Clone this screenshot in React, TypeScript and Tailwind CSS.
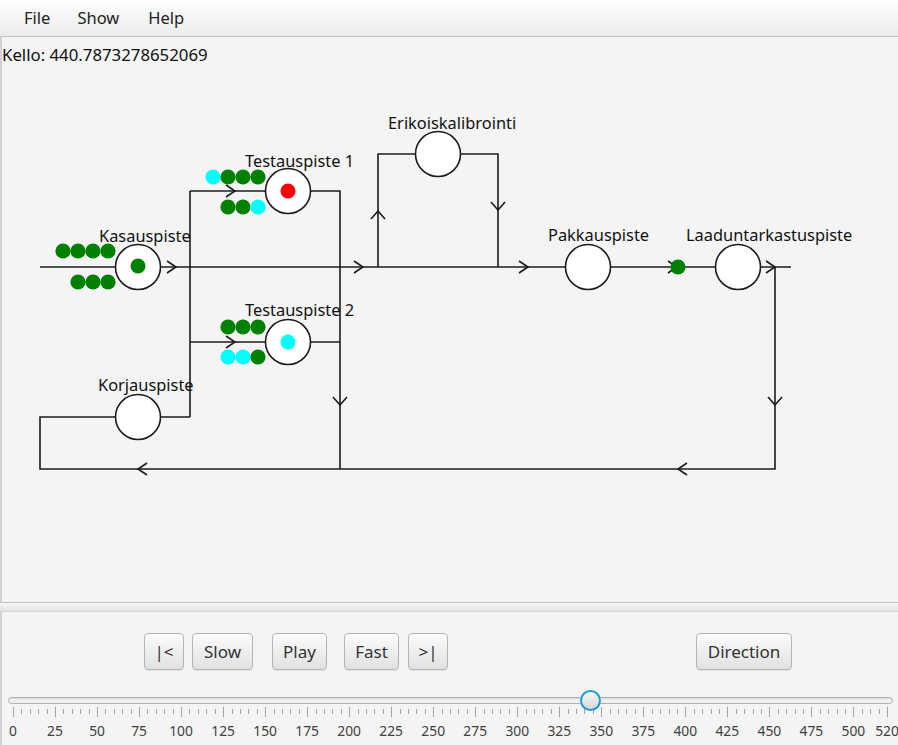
import type { ReactNode } from 'react';

type Pt = { x: number; y: number };
type Dot = Pt & { c: string };

const GREEN = '#008000';
const CYAN = '#00ffff';
const RED = '#ff0000';
const INK = '#1c1c1c';

const stations: { x: number; y: number; label: string; lx: number; ly: number; inner?: string }[] = [
  { x: 138, y: 267, label: 'Kasauspiste', lx: 99, ly: 236, inner: GREEN },
  { x: 288, y: 191, label: 'Testauspiste 1', lx: 245, ly: 161, inner: RED },
  { x: 288, y: 342, label: 'Testauspiste 2', lx: 245, ly: 310, inner: CYAN },
  { x: 438, y: 154, label: 'Erikoiskalibrointi', lx: 388, ly: 123 },
  { x: 588, y: 267, label: 'Pakkauspiste', lx: 548, ly: 235 },
  { x: 738, y: 267, label: 'Laaduntarkastuspiste', lx: 686, ly: 235 },
  { x: 138, y: 417, label: 'Korjauspiste', lx: 98, ly: 385 },
];

const queue: Dot[] = [
  { x: 63, y: 251, c: GREEN },
  { x: 78, y: 251, c: GREEN },
  { x: 93, y: 251, c: GREEN },
  { x: 108, y: 251, c: GREEN },
  { x: 78, y: 282, c: GREEN },
  { x: 93, y: 282, c: GREEN },
  { x: 108, y: 282, c: GREEN },
  { x: 213, y: 177, c: CYAN },
  { x: 228, y: 177, c: GREEN },
  { x: 243, y: 177, c: GREEN },
  { x: 258, y: 177, c: GREEN },
  { x: 228, y: 207, c: GREEN },
  { x: 243, y: 207, c: GREEN },
  { x: 258, y: 207, c: CYAN },
  { x: 228, y: 327, c: GREEN },
  { x: 243, y: 327, c: GREEN },
  { x: 258, y: 327, c: GREEN },
  { x: 228, y: 357, c: CYAN },
  { x: 243, y: 357, c: CYAN },
  { x: 258, y: 357, c: GREEN },
  { x: 678, y: 267, c: GREEN },
];

// tip point + direction of the chevron
const arrows: { x: number; y: number; d: 'r' | 'l' | 'u' | 'd' }[] = [
  { x: 176, y: 267, d: 'r' },
  { x: 235, y: 191, d: 'r' },
  { x: 235, y: 342, d: 'r' },
  { x: 363, y: 267, d: 'r' },
  { x: 378, y: 211, d: 'u' },
  { x: 498, y: 210, d: 'd' },
  { x: 528, y: 267, d: 'r' },
  { x: 677, y: 267, d: 'r' },
  { x: 775, y: 267, d: 'r' },
  { x: 340, y: 405, d: 'd' },
  { x: 775, y: 405, d: 'd' },
  { x: 678, y: 469, d: 'l' },
  { x: 138, y: 469, d: 'l' },
];

const chevron = (a: { x: number; y: number; d: string }) => {
  const { x, y } = a;
  if (a.d === 'r') return `M${x - 9} ${y - 6} L${x} ${y} L${x - 9} ${y + 6}`;
  if (a.d === 'l') return `M${x + 9} ${y - 6} L${x} ${y} L${x + 9} ${y + 6}`;
  if (a.d === 'u') return `M${x - 7} ${y + 8} L${x} ${y} L${x + 7} ${y + 8}`;
  return `M${x - 7} ${y - 8} L${x} ${y} L${x + 7} ${y - 8}`;
};

const Diagram = () => (
  <svg width="896" height="528" viewBox="2 74 896 528" className="block">
    <g stroke={INK} strokeWidth="1.6" fill="none">
      <path d="M40 267 H791" />
      <path d="M190 191 V417" />
      <path d="M190 191 H340 V469" />
      <path d="M190 342 H340" />
      <path d="M378 267 V154 H498 V267" />
      <path d="M775 267 V469 H40 V417 H190" />
      {arrows.map((a, i) => (
        <path key={i} d={chevron(a)} />
      ))}
    </g>
    {stations.map(s => (
      <g key={s.label}>
        <circle cx={s.x} cy={s.y} r="22.5" fill="#fff" stroke={INK} strokeWidth="1.6" />
        {s.inner && <circle cx={s.x} cy={s.y - (s.inner === GREEN ? 1 : 0)} r="7.5" fill={s.inner} />}
        <text x={s.lx} y={s.ly + 6} fontSize="16.4" fill="#111" fontFamily="'Noto Sans', sans-serif">
          {s.label}
        </text>
      </g>
    ))}
    {queue.map((d, i) => (
      <circle key={i} cx={d.x} cy={d.y} r="7.6" fill={d.c} />
    ))}
  </svg>
);

const Btn = ({ children, className }: { children: ReactNode; className: string }) => (
  <button
    type="button"
    className={`h-[37px] rounded-[4px] border border-[#b4b4b4] bg-linear-to-b from-[#fcfcfc] to-[#e1e1e1] text-[17px] text-[#333] shadow-[0_1px_1px_rgba(0,0,0,0.07)] ${className}`}
  >
    {children}
  </button>
);

const sx = (v: number) => 13 + (v * 874) / 520;

const Ticks = () => {
  const minors = Array.from({ length: 105 }, (_, i) => i * 5);
  const labels = Array.from({ length: 21 }, (_, i) => i * 25).concat([520]);
  return (
    <svg width="898" height="41" viewBox="0 704 898 41" className="block">
      <g stroke="#a3a3a3" strokeWidth="1">
        {minors.map(v => {
          const major = v % 25 === 0 || v === 520;
          const x = Math.round(sx(v)) + 0.5;
          return <line key={v} x1={x} x2={x} y1={major ? 707 : 709} y2={major ? 717 : 714} />;
        })}
      </g>
      {labels.map(v => (
        <text
          key={v}
          x={sx(v)}
          y={736}
          textAnchor="middle"
          fontSize="13.8"
          fill="#404040"
          fontFamily="'Noto Sans', sans-serif"
        >
          {v}
        </text>
      ))}
    </svg>
  );
};

const App = () => {
  return (
    <div className="w-[898px] h-[745px] flex flex-col overflow-hidden bg-[#f4f4f4] font-['Noto_Sans',sans-serif] text-[#111]">
      <div className="h-[37px] shrink-0 flex items-center border-b border-[#c4c4c4] bg-linear-to-b from-white to-[#ebebeb] text-[16.5px] text-[#222]">
        <span className="ml-[24px]">File</span>
        <span className="ml-[27px]">Show</span>
        <span className="ml-[29px]">Help</span>
      </div>

      <div className="flex-1 flex flex-col border-l-2 border-[#d2d2d2]">
        <div className="h-[37px] shrink-0 flex items-center text-[16.8px] leading-none">Kello: 440.7873278652069</div>
        <Diagram />
      </div>

      <div className="h-[10px] shrink-0 border-t border-b border-t-[#c2c2c2] border-b-[#d4d4d4] bg-linear-to-b from-[#f6f6f6] to-[#e3e3e3]" />

      <div className="h-[133px] shrink-0 flex flex-col border-l-2 border-[#d2d2d2]">
        <div className="flex pt-[21px]">
          <Btn className="ml-[142px] w-[40px]">|&lt;</Btn>
          <Btn className="ml-[8px] w-[61px]">Slow</Btn>
          <Btn className="ml-[19px] w-[55px]">Play</Btn>
          <Btn className="ml-[17px] w-[55px]">Fast</Btn>
          <Btn className="ml-[9px] w-[40px]">&gt;|</Btn>
          <Btn className="ml-[248px] w-[96px]">Direction</Btn>
        </div>
        <div className="relative mt-[27px] ml-[6px] w-[885px] h-[7px]">
          <div className="h-full rounded-full border border-[#b2b2b2] bg-[#efefef] shadow-[inset_0_1px_1px_rgba(0,0,0,0.08)]" />
          <div className="absolute left-[572px] top-[-7px] w-[21px] h-[21px] rounded-full border-2 border-[#1b9fd3] bg-linear-to-b from-[#f7f7f7] to-[#d9d9d9]" />
        </div>
        <div className="-ml-[2px]">
          <Ticks />
        </div>
      </div>
    </div>
  );
};

export default App;
